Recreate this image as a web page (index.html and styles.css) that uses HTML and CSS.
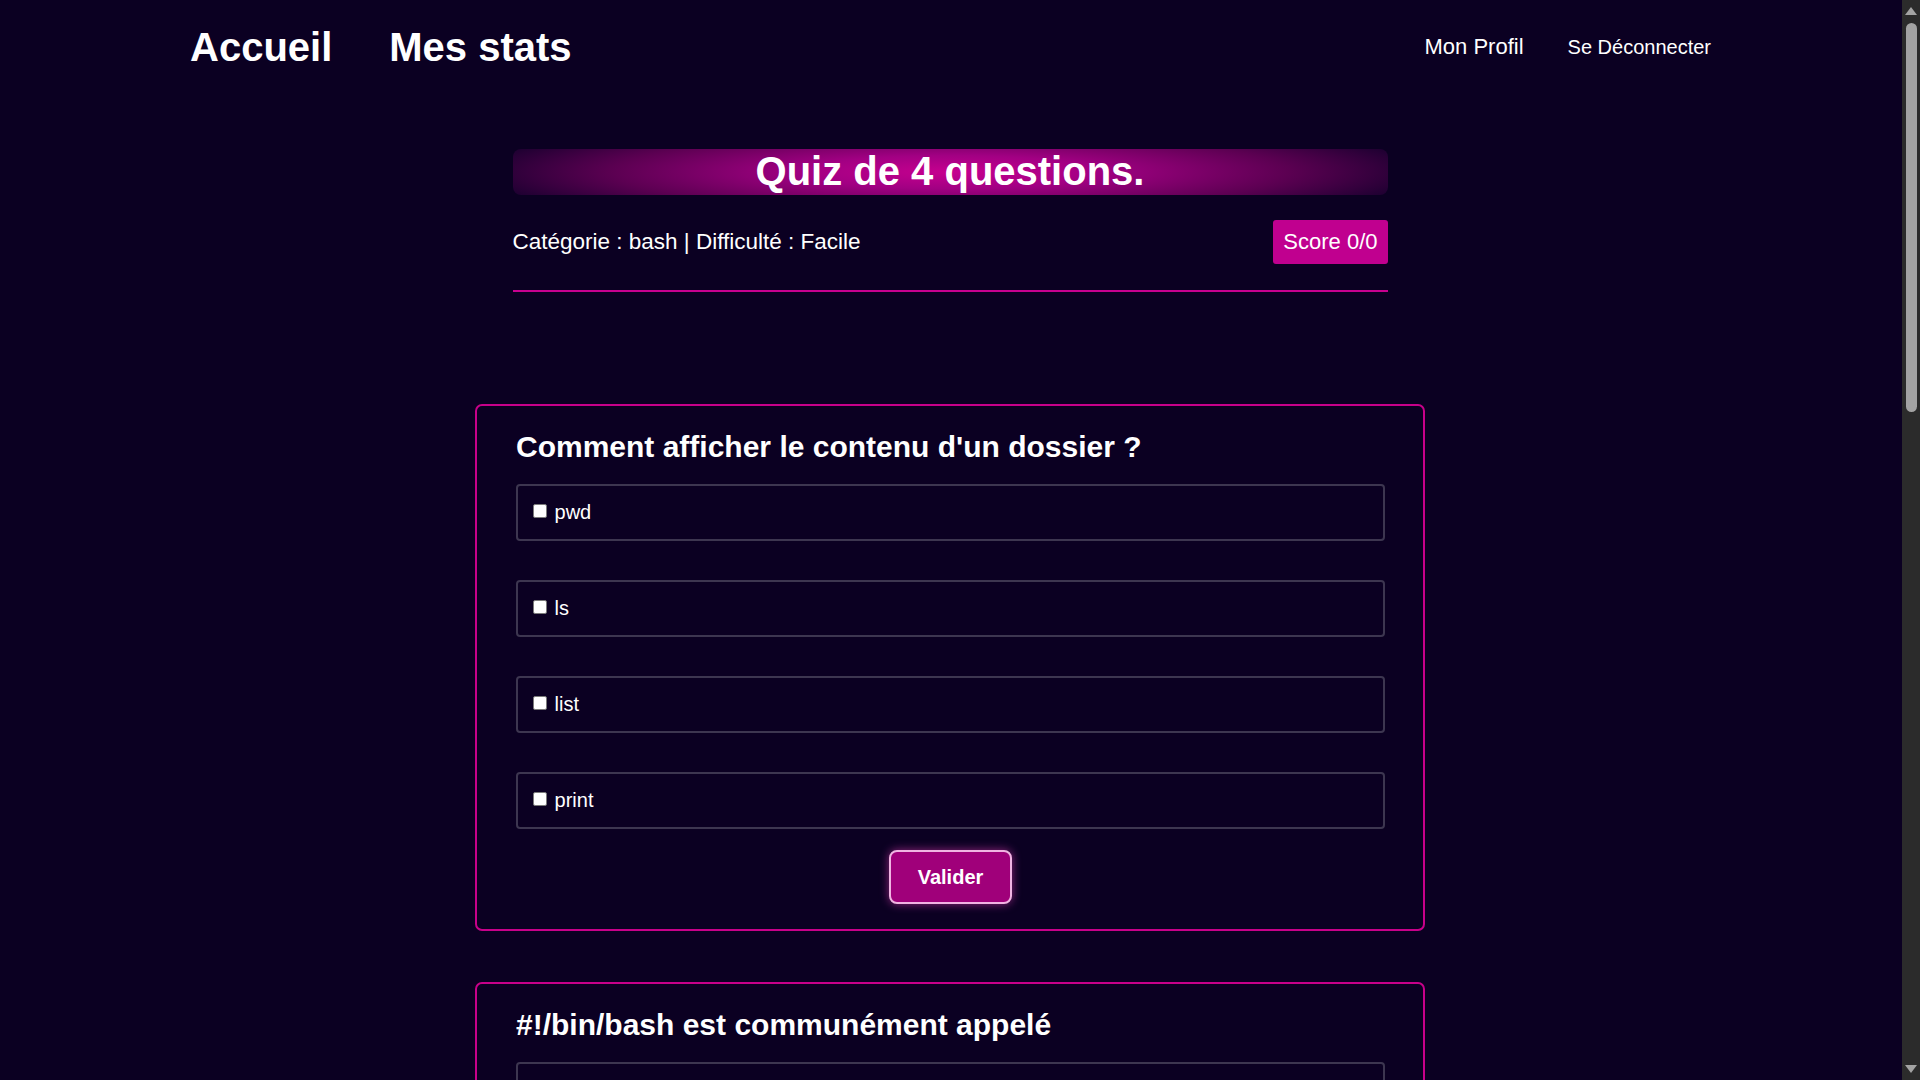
FILE: index.html
```html
<!DOCTYPE html>
<html lang="fr">
<head>
<meta charset="utf-8">
<title>Quiz</title>
<link rel="stylesheet" href="styles.css">
</head>
<body>
<header class="topbar">
  <nav class="nav-left">
    <a href="#" class="nav-big">Accueil</a>
    <a href="#" class="nav-big">Mes stats</a>
  </nav>
  <nav class="nav-right">
    <a href="#" class="nav-profile">Mon Profil</a>
    <a href="#" class="nav-logout">Se Déconnecter</a>
  </nav>
</header>
<main class="content">
  <section class="quiz-head">
    <h1 class="banner">Quiz de 4 questions.</h1>
    <div class="meta">
      <span class="meta-text">Catégorie : bash | Difficulté : Facile</span>
      <span class="score">Score 0/0</span>
    </div>
    <div class="rule"></div>
  </section>

  <div class="cards">
    <form class="card">
      <h2 class="question">Comment afficher le contenu d'un dossier ?</h2>
      <div class="options">
        <label class="option"><input type="checkbox"> pwd</label>
        <label class="option"><input type="checkbox"> ls</label>
        <label class="option"><input type="checkbox"> list</label>
        <label class="option"><input type="checkbox"> print</label>
      </div>
      <div class="actions"><button type="button" class="btn">Valider</button></div>
    </form>

    <form class="card">
      <h2 class="question">#!/bin/bash est communément appelé</h2>
      <div class="options">
        <label class="option"><input type="checkbox"> shebang</label>
        <label class="option"><input type="checkbox"> hashbang</label>
        <label class="option"><input type="checkbox"> bashbang</label>
        <label class="option"><input type="checkbox"> sharpbang</label>
      </div>
      <div class="actions"><button type="button" class="btn">Valider</button></div>
    </form>

    <form class="card">
      <h2 class="question">Quelle commande permet de changer de répertoire ?</h2>
      <div class="options">
        <label class="option"><input type="checkbox"> cd</label>
        <label class="option"><input type="checkbox"> mv</label>
        <label class="option"><input type="checkbox"> chdir</label>
        <label class="option"><input type="checkbox"> dir</label>
      </div>
      <div class="actions"><button type="button" class="btn">Valider</button></div>
    </form>

    <form class="card">
      <h2 class="question">Quel symbole redirige la sortie vers un fichier ?</h2>
      <div class="options">
        <label class="option"><input type="checkbox"> &gt;</label>
        <label class="option"><input type="checkbox"> &lt;</label>
        <label class="option"><input type="checkbox"> |</label>
        <label class="option"><input type="checkbox"> &amp;</label>
      </div>
      <div class="actions"><button type="button" class="btn">Valider</button></div>
    </form>
  </div>
</main>
<div class="scrollbar" aria-hidden="true">
  <span class="sb-up"></span>
  <span class="sb-thumb"></span>
  <span class="sb-down"></span>
</div>
</body>
</html>
```

FILE: styles.css
```css
html, body {
  margin: 0;
  padding: 0;
  background: #0b0022;
}

body {
  font-family: "Liberation Sans", Arial, sans-serif;
  color: #ffffff;
  padding-right: 18px;
}

a {
  color: #ffffff;
  text-decoration: none;
}

.topbar {
  height: 94px;
  display: flex;
  align-items: center;
  justify-content: space-between;
  padding: 0 191px 0 190px;
}

.nav-left {
  display: flex;
  align-items: center;
  gap: 57px;
}

.nav-big {
  font-size: 40px;
  font-weight: bold;
}

.nav-right {
  display: flex;
  align-items: center;
  gap: 44px;
}

.nav-profile {
  font-size: 22px;
}

.nav-logout {
  font-size: 20px;
}

.content {
  display: flex;
  flex-direction: column;
  align-items: center;
  padding: 0 2px 235px 0;
}

.quiz-head {
  width: 875px;
  margin-top: 55px;
}

.banner {
  margin: 0;
  height: 46px;
  font-size: 40px;
  font-weight: bold;
  line-height: normal;
  text-align: center;
  border-radius: 8px;
  background: radial-gradient(ellipse 55% 120% at 50% 50%, #c6008f 0%, #a20083 30%, #5c0052 70%, #1c0030 100%);
}

.meta {
  margin-top: 25px;
  display: flex;
  align-items: center;
  justify-content: space-between;
  font-size: 22px;
}

.meta-text {
  font-size: 22.5px;
}

.score {
  background: #c0008f;
  padding: 9px 10px;
  border-radius: 3px;
}

.rule {
  margin-top: 26px;
  height: 2px;
  background: #c8008f;
}

.cards {
  margin-top: 112px;
  display: flex;
  flex-direction: column;
  gap: 51px;
}

.card {
  width: 950px;
  box-sizing: border-box;
  border: 2px solid #c8008a;
  border-radius: 7px;
  padding: 0 38px 25px 39px;
}

.question {
  margin: 24px 0 20px;
  font-size: 30px;
  font-weight: bold;
  line-height: normal;
}

.options {
  display: flex;
  flex-direction: column;
  gap: 39px;
}

.option {
  display: block;
  border: 2px solid #3d3650;
  border-radius: 4px;
  padding: 15px 11px;
  font-size: 20px;
  line-height: 23px;
}

.option input {
  -webkit-appearance: none;
  appearance: none;
  box-sizing: border-box;
  width: 14px;
  height: 14px;
  margin: 3px 2px 1px 4px;
  border: 1px solid #7a7a7a;
  border-radius: 2px;
  background: #ffffff;
}

.actions {
  display: flex;
  justify-content: center;
  margin-top: 21px;
}

.btn {
  font-family: "Liberation Sans", Arial, sans-serif;
  font-size: 20px;
  font-weight: bold;
  line-height: 23px;
  color: #ffffff;
  background: #a0007a;
  border: 2px solid #f0b4e2;
  border-radius: 8px;
  padding: 13.5px 27px;
  box-shadow: 0 0 10px rgba(255, 70, 200, 0.55);
  cursor: pointer;
}

.scrollbar {
  position: fixed;
  top: 0;
  right: 0;
  width: 18px;
  height: 100vh;
  background: #2b2b2b;
}

.sb-up,
.sb-down {
  position: absolute;
  left: 3px;
  width: 0;
  height: 0;
  border-left: 6px solid transparent;
  border-right: 6px solid transparent;
}

.sb-up {
  top: 7px;
  border-bottom: 8px solid #a3a3a3;
}

.sb-down {
  bottom: 7px;
  border-top: 8px solid #a3a3a3;
}

.sb-thumb {
  position: absolute;
  top: 23px;
  left: 4px;
  width: 11px;
  height: 389px;
  border-radius: 6px;
  background: #a3a3a3;
}
```
